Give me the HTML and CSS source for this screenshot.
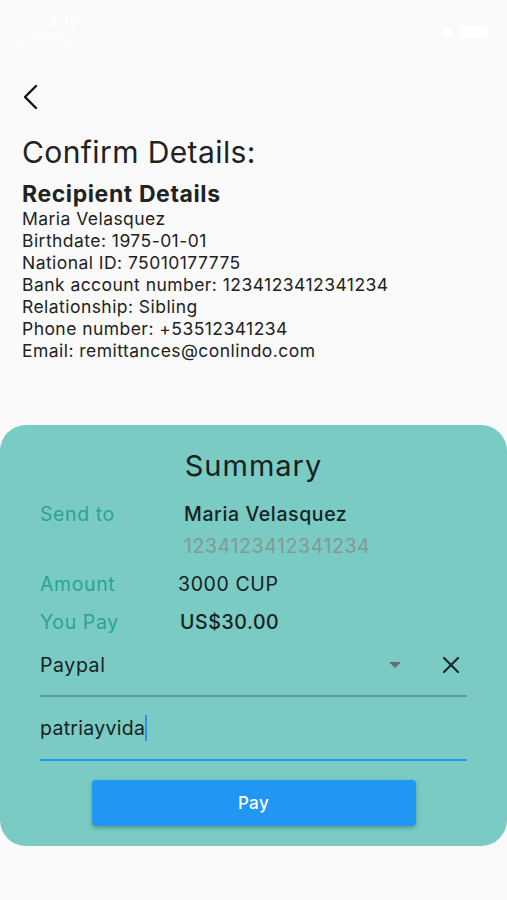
FILE: index.html
```html
<!DOCTYPE html>
<html lang="en">
<head>
    <meta charset="UTF-8">
    <meta name="viewport" content="width=device-width, initial-scale=1.0">
    <title>Confirm Details</title>
    <link rel="stylesheet" href="styles.css">
</head>
<body>
    <!-- status bar (white on white, barely visible) -->
    <div class="status">
        <div class="status-left">
            <span class="time">4:15</span>
            <span class="back-app">&#9666; Search</span>
        </div>
        <div class="status-right">
            <span>&#9679;</span>
            <span class="battery"></span>
        </div>
    </div>

    <div class="page">
        <a class="back" href="#">
            <svg width="18" height="26" viewBox="0 0 18 26">
                <path d="M14 2 L3 13 L14 24" fill="none" stroke="#111" stroke-width="2.4" stroke-linecap="round" stroke-linejoin="round"/>
            </svg>
        </a>

        <h1 class="title">Confirm Details:</h1>

        <div class="recipient">
            <h2>Recipient Details</h2>
            <p>Maria Velasquez</p>
            <p>Birthdate: 1975-01-01</p>
            <p>National ID: 75010177775</p>
            <p>Bank account number: 1234123412341234</p>
            <p>Relationship: Sibling</p>
            <p>Phone number: +53512341234</p>
            <p>Email: remittances@conlindo.com</p>
        </div>
    </div>

    <div class="card">
        <h3 class="card-title">Summary</h3>

        <div class="row">
            <span class="label">Send to</span>
            <div class="value">
                <span class="name">Maria Velasquez</span>
                <span class="account">1234123412341234</span>
            </div>
        </div>
        <div class="row">
            <span class="label">Amount</span>
            <span class="value amount">3000 CUP</span>
        </div>
        <div class="row">
            <span class="label">You Pay</span>
            <span class="value pay">US$30.00</span>
        </div>

        <div class="select">
            <span class="select-text">Paypal</span>
            <span class="caret"></span>
            <svg class="clear" width="20" height="20" viewBox="0 0 20 20">
                <path d="M3 3 L17 17 M17 3 L3 17" stroke="#1d2a28" stroke-width="2.2" stroke-linecap="round"/>
            </svg>
        </div>

        <div class="field">
            <span class="field-text">patriayvida</span><span class="cursor"></span>
        </div>

        <button class="pay-btn">Pay</button>
    </div>
</body>
</html>
```

FILE: styles.css
```css
* {
    margin: 0;
    padding: 0;
    box-sizing: border-box;
}
body, html {
    font-family: Inter, "Noto Sans", sans-serif;
    background: #fafafa;
    color: #222;
}
/* status bar */
.status {
    height: 60px;
    display: flex;
    justify-content: space-between;
    padding: 12px 20px 0 20px;
    color: #fff;
}
.status-left {
    display: flex;
    flex-direction: column;
    padding-left: 28px;
}
.time {
    font-size: 15px;
    font-weight: 600;
}
.back-app {
    font-size: 11px;
    margin-left: -28px;
}
.status-right {
    display: flex;
    gap: 8px;
    align-items: center;
    height: 24px;
    margin-top: 8px;
    font-size: 12px;
}
.battery {
    width: 26px;
    height: 12px;
    background: #fff;
    border-radius: 3px;
}
/* page */
.page {
    padding: 0 22px;
}
.back {
    display: block;
    width: 18px;
    height: 26px;
    margin-top: 24px;
}
.title {
    font-size: 30px;
    font-weight: 400;
    margin-top: 24px;
    letter-spacing: 0.4px;
}
.recipient {
    margin-top: 10px;
}
.recipient h2 {
    font-size: 23px;
    font-weight: 700;
    line-height: 28px;
    letter-spacing: 0.6px;
}
.recipient p {
    font-size: 17.5px;
    line-height: 22px;
    letter-spacing: 0.45px;
}
/* summary card */
.card {
    margin-top: 63px;
    background: #7acbc3;
    border-radius: 26px;
    padding: 23px 40px 20px 40px;
}
.card-title {
    text-align: center;
    font-size: 29px;
    font-weight: 400;
    color: #17211f;
    line-height: 36px;
    letter-spacing: 1px;
}
.row {
    display: flex;
    margin-top: 17px;
}
.row + .row {
    margin-top: 12px;
}
.label {
    width: 144px;
    font-size: 19.5px;
    line-height: 26px;
    letter-spacing: 0.6px;
    color: #2ba394;
}
.value {
    display: flex;
    flex-direction: column;
    font-size: 19.5px;
    line-height: 26px;
    letter-spacing: 0.6px;
    color: #17211f;
}
.name {
    font-weight: 500;
}
.account {
    color: #849895;
    margin-top: 6px;
}
.amount {
    margin-left: -6px;
}
.pay {
    margin-left: -4px;
    font-weight: 500;
}
.select {
    display: flex;
    align-items: center;
    height: 62px;
    border-bottom: 2px solid #5c9e97;
}
.select-text {
    flex: 1;
    font-size: 19.5px;
    letter-spacing: 0.6px;
    color: #17211f;
}
.caret {
    width: 0;
    height: 0;
    border-left: 6px solid transparent;
    border-right: 6px solid transparent;
    border-top: 6px solid #6b6b6b;
    margin-right: 40px;
}
.clear {
    margin-right: 6px;
}
.field {
    display: flex;
    align-items: center;
    height: 64px;
    border-bottom: 2px solid #2196f3;
}
.field-text {
    font-size: 19.5px;
    letter-spacing: 0.3px;
    color: #17211f;
}
.cursor {
    width: 2px;
    height: 26px;
    background: #2196f3;
}
.pay-btn {
    display: block;
    width: 324px;
    height: 46px;
    margin: 19px auto 0 auto;
    border: none;
    border-radius: 4px;
    background: #2196f3;
    color: #fff;
    font-family: Inter, "Noto Sans", sans-serif;
    font-size: 17px;
    font-weight: 500;
    letter-spacing: 0.4px;
    box-shadow: 0 2px 4px rgba(0,0,0,.25);
}
```
